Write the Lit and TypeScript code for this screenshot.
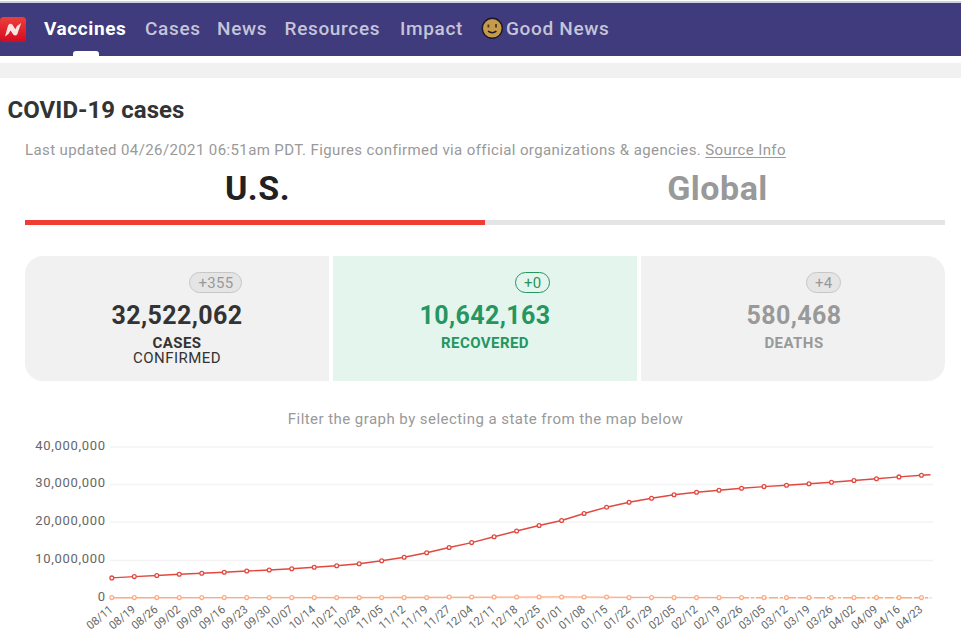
import { LitElement, html, svg, css } from "lit";
import { customElement } from "lit/decorators.js";

const LABELS = [
  "08/11", "08/19", "08/26", "09/02", "09/09", "09/16", "09/23", "09/30", "10/07", "10/14",
  "10/21", "10/28", "11/05", "11/12", "11/19", "11/27", "12/04", "12/11", "12/18", "12/25",
  "01/01", "01/08", "01/15", "01/22", "01/29", "02/05", "02/12", "02/19", "02/26", "03/05",
  "03/12", "03/19", "03/26", "04/02", "04/09", "04/16", "04/23",
];
const CASES = [
  147.9, 146.6, 145.5, 144.3, 143.3, 142.3, 141, 140, 138.7, 137.3, 135.7, 133.8, 130.8, 127.3,
  122.8, 117.5, 112.6, 106.8, 101, 95.5, 90.5, 83.5, 77.2, 72.3, 68.3, 64.8, 62.2, 60.2, 58.3,
  56.6, 55.2, 53.8, 52.2, 50.5, 48.8, 46.9, 45.2,
];
const GRID: [number, number, string][] = [
  [17, 20.3, "40,000,000"],
  [54.5, 57.3, "30,000,000"],
  [92, 95.3, "20,000,000"],
  [130.5, 133.3, "10,000,000"],
  [168, 171.2, "0"],
];
const X0 = 111.8;
const STEP = 22.49;
const END = 930.5;

@customElement("case-chart")
export class CaseChart extends LitElement {
  static styles = css`
    :host { display: block; height: 200px; }
    svg { display: block; overflow: hidden; }
    text { font-family: Roboto, sans-serif; fill: #666; }
    .value { font-size: 13px; letter-spacing: 0.7px; }
    .date { font-size: 11.4px; }
    .grid { stroke: #f3f3f3; stroke-width: 1.6; }
    .line { fill: none; stroke-width: 1.4; }
    .cases { stroke: #e2483f; }
    .deaths { stroke: #ffab82; }
    .broken { stroke-dasharray: 9 2 3 2 11 2; }
    circle { fill: #fff; stroke-width: 1.3; }
  `;
  render() {
    const pts = CASES.map((y, i) => `${X0 + i * STEP},${y}`).join(" ");
    return html`<svg width="961" height="200" viewBox="0 0 961 200">
      ${GRID.map(([y, base, t]) => svg`
        <line class="grid" x1="110" x2="933" y1=${y} y2=${y}></line>
        <text class="value" x="105.8" y=${base} text-anchor="end">${t}</text>`)}
      <polyline class="line deaths" points="${X0},167.7 400,167.5 560,166.9 635,167.4 740,167.6"></polyline>
      <line class="line deaths broken" x1="740" x2=${END} y1="167.7" y2="167.7"></line>
      <polyline class="line cases" points="${pts} ${END},44.7"></polyline>
      ${LABELS.map((t, i) => {
        const x = X0 + i * STEP;
        return svg`
          <circle class="deaths" cx=${x} cy=${i > 14 && i < 23 ? 167 : 167.6} r="1.9"></circle>
          <circle class="cases" cx=${x} cy=${CASES[i]} r="1.9"></circle>
          <text class="date" text-anchor="end" transform="translate(${x + 1.9} 180.6) rotate(-40)">${t}</text>`;
      })}
    </svg>`;
  }
}

@customElement("app-root")
export class AppRoot extends LitElement {
  static styles = css`
    :host {
      display: block; width: 961px; height: 630px; overflow: hidden;
      background: #fff; font-family: Roboto, sans-serif; color: #333;
    }
    * { box-sizing: border-box; }
    .nav {
      height: 56px; border-top: 1px solid #fff; background: #3f3b7d;
      display: flex; align-items: stretch;
      box-shadow: inset 0 2px #cdd3dc;
    }
    .logo { width: 26px; height: 25px; margin: 16px 18px 0 0; flex: none; }
    .item {
      position: relative; flex: none; display: flex; white-space: nowrap; padding-top: 17px;
      font-size: 19px; line-height: 22px; font-weight: 500; letter-spacing: 0.67px; color: #c5c4d8;
    }
    .active { color: #fff; font-weight: 700; letter-spacing: 0.6px; }
    .active::after {
      content: ""; position: absolute; left: 28.5px; bottom: 0; width: 26px; height: 5px;
      background: #fff; border-radius: 3px 3px 0 0;
    }
    .w1 { width: 101px; } .w2 { width: 72px; } .w3 { width: 67.5px; }
    .w4 { width: 115.5px; } .w5 { width: 81px; }
    .smile { width: 22px; height: 22px; margin: -1px 3px 0 0; }
    .band { height: 15px; margin-top: 7px; background: #f1f1f1; }
    h1 { margin: 17px 0 0 7.5px; font-size: 24px; line-height: 30px; font-weight: 700; letter-spacing: 0.05px; white-space: nowrap; }
    main { margin: 0 16px 0 25px; }
    .note { margin-top: 15px; height: 20px; line-height: 20px; font-size: 15px; letter-spacing: 0.39px; color: #999; white-space: nowrap; }
    .src { text-decoration: underline; text-underline-offset: 2px; }
    .tabs { display: grid; grid-template-columns: 1fr 1fr; height: 65px; }
    .tab {
      text-align: center; font-size: 34px; line-height: 40px; font-weight: 700; padding: 8px 0 0 5px;
      color: #999; border-bottom: 5px solid #e5e5e5; letter-spacing: 0.5px;
    }
    .on { color: #212121; border-color: #ee3d35; }
    .stats { display: grid; grid-template-columns: repeat(3, 304px); gap: 4px; height: 125px; margin-top: 31px; border-radius: 18px; overflow: hidden; }
    .stat { background: #f1f1f1; display: flex; flex-direction: column; align-items: center; }
    .block { display: flex; flex-direction: column; align-items: flex-end; padding-top: 16px; }
    .pill {
      height: 21px; border: 1px solid #c6c6c6; background: #e5e5e5; color: #999; border-radius: 11px;
      padding: 0 8px; font-size: 15px; line-height: 20px; letter-spacing: 0.3px;
    }
    .num { font-size: 25px; font-weight: 700; line-height: 30px; margin-top: 8px; letter-spacing: 0.38px; }
    .label { font-size: 15px; line-height: 15px; font-weight: 700; margin-top: 5px; letter-spacing: 0.45px; }
    .sub { font-size: 15px; line-height: 15px; letter-spacing: 0.45px; }
    .green { background: #e4f5ed; color: #24965f; }
    .green .pill { background: transparent; border-color: #24965f; color: #24965f; }
    .gray { color: #999; padding-left: 2px; }
    .hint { height: 49px; padding: 28px 0 0 1px; line-height: 20px; text-align: center; font-size: 15px; letter-spacing: 0.45px; color: #999; }
  `;
  render() {
    return html`
      <nav class="nav">
        <svg class="logo" viewBox="0 0 26 25">
          <defs><linearGradient id="red" x2="0" y2="1"><stop stop-color="#ed3f39"></stop><stop offset="1" stop-color="#d50920"></stop></linearGradient></defs>
          <rect width="26" height="25" rx="3.5" fill="url(#red)"></rect>
          <path d="M5 19.5 Q7 12 8.2 8.2 Q10 5.8 12.4 7.6 L15.3 12.2 Q17 8 21.2 6 Q19 12 17.4 17 Q15.8 19.6 13.4 17.8 L10.6 13.6 Q9 17.6 5 19.5 Z" fill="#fbe3e1"></path>
        </svg>
        <span class="item active w1">Vaccines</span>
        <span class="item w2">Cases</span>
        <span class="item w3">News</span>
        <span class="item w4">Resources</span>
        <span class="item w5">Impact</span>
        <span class="item">
          <svg class="smile" viewBox="0 0 22 22">
            <circle cx="11.3" cy="11.3" r="10" fill="#c59a4b" stroke="#19172a" stroke-width="1.4"></circle>
            <path d="M7.4 7.5v3M15 7v3.5" stroke="#4b3821" stroke-width="1.8"></path>
            <path d="M7 14.2q4.3 3 8.4 0" fill="none" stroke="#19172a" stroke-width="1.5"></path>
          </svg>Good News</span>
      </nav>
      <div class="band"></div>
      <h1>COVID-19 cases</h1>
      <main>
        <div class="note">Last updated 04/26/2021 06:51am PDT. Figures confirmed via official organizations &amp; agencies. <span class="src">Source Info</span></div>
        <div class="tabs"><div class="tab on">U.S.</div><div class="tab">Global</div></div>
        <div class="stats">
          <div class="stat"><div class="block"><span class="pill">+355</span><span class="num">32,522,062</span></div><span class="label">CASES</span><span class="sub">CONFIRMED</span></div>
          <div class="stat green"><div class="block"><span class="pill">+0</span><span class="num">10,642,163</span></div><span class="label">RECOVERED</span></div>
          <div class="stat gray"><div class="block"><span class="pill">+4</span><span class="num">580,468</span></div><span class="label">DEATHS</span></div>
        </div>
        <div class="hint">Filter the graph by selecting a state from the map below</div>
      </main>
      <case-chart></case-chart>`;
  }
}
